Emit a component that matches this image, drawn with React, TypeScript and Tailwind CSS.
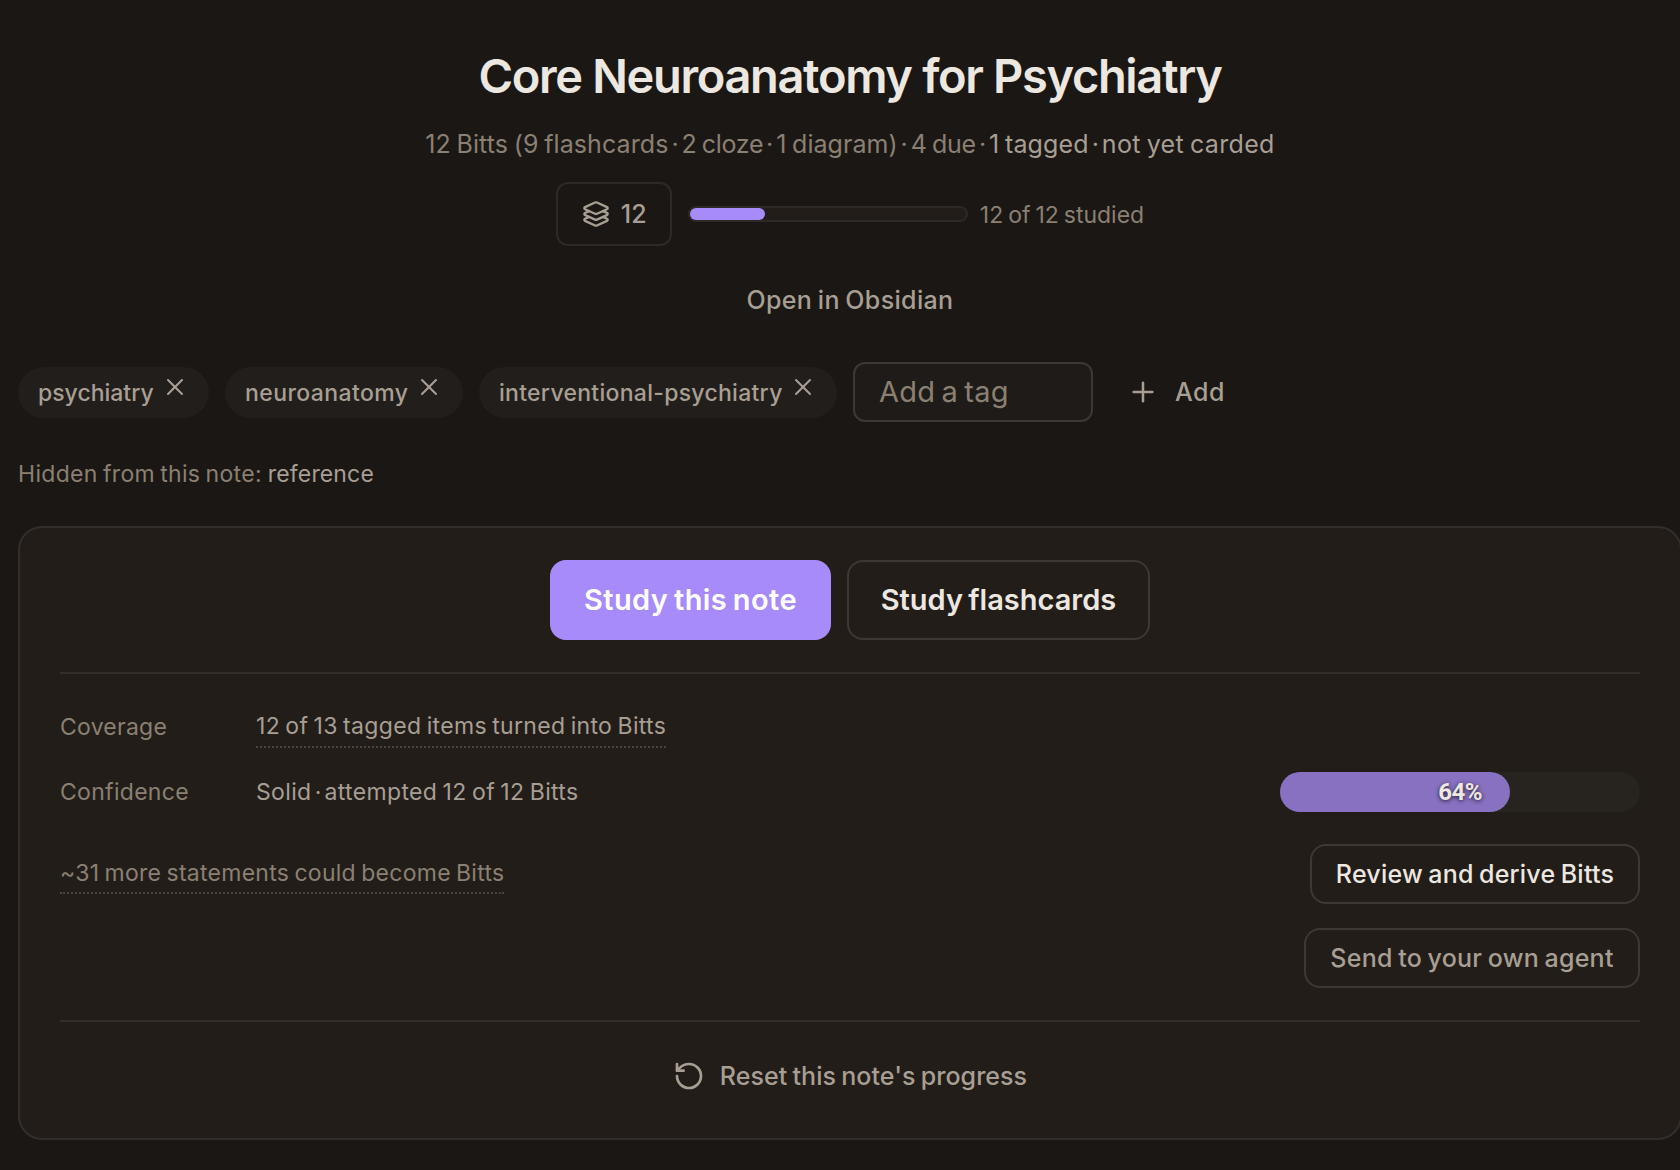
import { Plus, RotateCcw, X } from "lucide-react";

const tags = [
	{ name: "psychiatry", className: "w-[191px]" },
	{ name: "neuroanatomy", className: "w-[238px] tracking-[0.4px]" },
	{ name: "interventional-psychiatry", className: "w-[358px] tracking-[0.28px]" },
];

// three stacked sheets, the lower two tucked under the one above
function LayersIcon() {
	return (
		<svg viewBox="0 0 24 24" className="size-7" fill="none" stroke="currentColor" strokeWidth="2" strokeLinecap="round" strokeLinejoin="round">
			<path d="m12.83 2.18a2 2 0 0 0-1.66 0L2.6 6.08a1 1 0 0 0 0 1.83l8.58 3.91a2 2 0 0 0 1.66 0l8.58-3.9a1 1 0 0 0 0-1.83Z"/>
			<path d="m6.08 9.5-3.5 1.6a1 1 0 0 0 0 1.81l8.6 3.91a2 2 0 0 0 1.65 0l8.58-3.9a1 1 0 0 0 0-1.83l-3.5-1.59"/>
			<path d="m6.08 14.5-3.5 1.6a1 1 0 0 0 0 1.81l8.6 3.91a2 2 0 0 0 1.65 0l8.58-3.9a1 1 0 0 0 0-1.83l-3.5-1.59"/>
		</svg>
	);
}

function Dot() {
	return <span className="inline-block w-[13px] text-center tracking-normal">·</span>;
}

function Header() {
	return (
		<header className="flex flex-col items-center">
			<h1 className="h-14 text-[47px] leading-[56px] font-semibold tracking-[-1.35px] text-[#ece8e1]">
				Core Neuroanatomy for Psychiatry
			</h1>
			<p className="mt-[22px] flex h-9 text-[25px] leading-9 text-[#8a8073] [word-spacing:-1.5px]">
				<span className="tracking-[0.1px]">12 Bitts (9 flashcards</span><Dot/>
				<span className="tracking-[-0.3px]">2 cloze</span><Dot/>
				<span className="tracking-[0.05px]">1 diagram)</span><Dot/>
				<span className="tracking-[-0.2px]">4 due</span><Dot/>
				<span className="flex text-[#a89f94]">
					<span className="tracking-[0.15px]">1 tagged</span><Dot/><span className="tracking-[0.35px]">not yet carded</span>
				</span>
			</p>
			<div className="mt-5 flex h-16 items-center">
				<div className="flex h-16 w-[116px] items-center rounded-xl border-2 border-[#2d2925] pl-6 text-[25px] font-medium text-[#a89f94]">
					<LayersIcon/>
					<span className="ml-[11px] pt-0.5">12</span>
				</div>
				<div className="ml-4 h-4 w-[280px] rounded-full border-2 border-[#2d2925] bg-[#221d19]">
					<div className="h-3 w-[75px] rounded-full bg-[#a78bfa]"/>
				</div>
				<span className="ml-3 pt-0.5 text-[23px] text-[#8a8073] [word-spacing:-1.5px]">12 of 12 studied</span>
			</div>
			<button className="mt-[35px] h-10 text-[25px] font-medium tracking-[0.35px] text-[#a89f94] [word-spacing:-1.5px]">
				Open in Obsidian
			</button>
		</header>
	);
}

function TagBar() {
	return (
		<div className="mt-[41px] flex h-[60px] items-center gap-4 text-[#a89f94]">
			{tags.map(({ name, className }) => (
				<span key={name}
							className={`flex h-[51px] items-center justify-between rounded-full bg-[#221e1b] pr-5 pl-5 text-[23px] font-medium ${className}`}>
					<span className="pt-0.5">{name}</span>
					<X className="mb-[10px] size-7 shrink-0" strokeWidth={1.75}/>
				</span>
			))}
			<input placeholder="Add a tag"
						 className="h-[60px] w-[240px] rounded-xl border-2 border-[#3d3833] bg-[#1f1b18] pr-6 pb-0.5 pl-6 text-[29px] tracking-[0.2px] [word-spacing:-2px] placeholder:text-[#8a8073]"/>
			<button className="ml-[18px] flex items-center gap-4 text-[25px] font-medium tracking-[0.5px]">
				<Plus className="size-8" strokeWidth={1.9}/>
				<span className="pt-0.5">Add</span>
			</button>
		</div>
	);
}

function StudyCard() {
	return (
		<section className="mt-9 flex h-[614px] flex-col rounded-3xl border-2 border-[#332e29] bg-[#221d19] px-10 pt-8 text-[#a89f94]">
			<div className="flex justify-center gap-4 text-[29px] font-semibold">
				<button className="h-20 w-[281px] rounded-2xl bg-[#a78bfa] tracking-[0.4px] text-white [word-spacing:-2px]">Study this note</button>
				<button className="h-20 w-[303px] rounded-2xl border-2 border-[#3d3833] text-[#ece8e1] [word-spacing:-2px]">Study flashcards</button>
			</div>

			<div className="mt-8 border-t-2 border-[#332e29] pt-[34px] text-[23px] [word-spacing:-1.5px]">
				<div className="flex h-10">
					<span className="w-[196px] leading-[38px] tracking-[0.25px] text-[#8a8073]">Coverage</span>
					<span className="border-b-2 border-dotted border-[#4a443e] leading-9 tracking-[0.33px]">12 of 13 tagged items turned into Bitts</span>
				</div>
				<div className="mt-6 flex h-10 items-center">
					<span className="w-[196px] tracking-[0.3px] text-[#8a8073]">Confidence</span>
					<span className="tracking-[0.35px]">Solid<Dot/>attempted 12 of 12 Bitts</span>
					<div className="ml-auto h-10 w-[360px] rounded-full bg-[#27231f]">
						<div className="flex h-10 w-[230px] items-center justify-end rounded-full bg-[#8871c1] pr-7 font-['Roboto'] text-[24px] font-bold tracking-[-0.5px] text-[#ece8e1] [text-shadow:0_1px_4px_rgba(0,0,0,0.8)]">
							64%
						</div>
					</div>
				</div>
				<div className="mt-8 flex items-start justify-between">
					<span className="mt-[11px] h-[39px] border-b-2 border-dotted border-[#4a443e] leading-9 tracking-[0.27px] text-[#8a8073]">
						~31 more statements could become Bitts
					</span>
					<div className="flex flex-col items-end gap-6 text-[25px] font-medium">
						<button className="h-[60px] w-[330px] rounded-2xl border-2 border-[#3d3833] pt-0.5 tracking-[0.22px] text-[#ece8e1] [word-spacing:-1.5px]">Review and derive Bitts</button>
						<button className="h-[60px] w-[336px] rounded-2xl border-2 border-[#3d3833] pt-0.5 tracking-[0.27px] [word-spacing:-1.5px]">Send to your own agent</button>
					</div>
				</div>
			</div>

			<div className="mt-8 flex justify-center border-t-2 border-[#332e29] pt-9">
				<button className="flex h-[38px] items-center gap-[15px] text-[25px] font-medium tracking-[0.05px] [word-spacing:-1.5px]">
					<RotateCcw className="mb-0.5 size-8" strokeWidth={2}/>
					Reset this note's progress
				</button>
			</div>
		</section>
	);
}

export default function App() {
	return (
		<div className="h-[1170px] w-full overflow-hidden bg-[#1b1714] font-['Inter',sans-serif] whitespace-nowrap">
			<main className="ml-[18px] w-[1664px] pt-12">
				<Header/>
				<TagBar/>
				<p className="mt-9 flex h-8 gap-[6px] text-[23px] leading-8 text-[#8a8073] [word-spacing:-1.5px]">
					<span className="tracking-[0.31px]">Hidden from this note:</span>
					<span className="tracking-[0.15px] text-[#a89f94]">reference</span>
				</p>
				<StudyCard/>
			</main>
		</div>
	);
}
